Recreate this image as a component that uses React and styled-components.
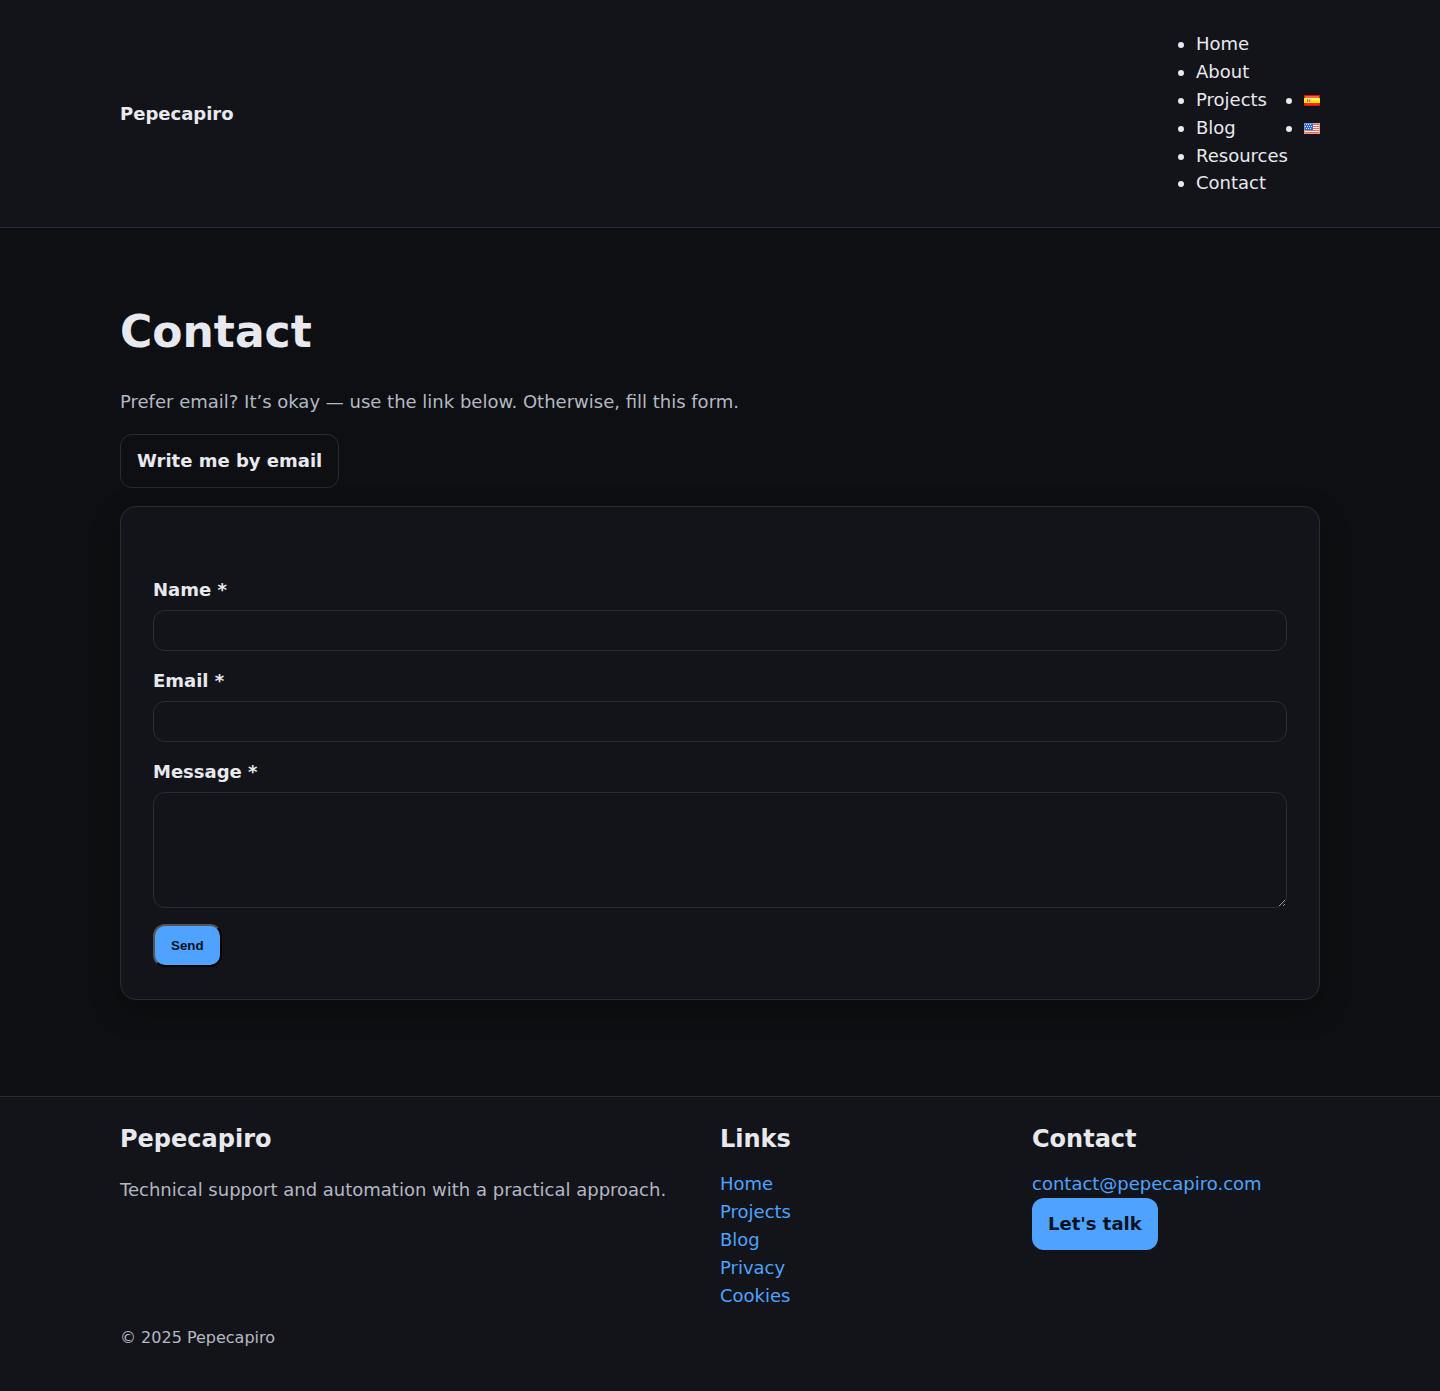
import React from "react";
import styled, { createGlobalStyle } from "styled-components";

const Global = createGlobalStyle`
  *, *::before, *::after { box-sizing: border-box; }
  body {
    margin: 0;
    background: #0e0f12;
    color: #e8e9ee;
    font: 400 18px/1.55 "DejaVu Sans", sans-serif;
  }
`;

const Container = styled.div`
  width: 1200px;
  margin: 0 auto;
`;

const Header = styled.header`
  background: #131419;
  border-bottom: 1px solid #2a2b36;
`;

const Bar = styled(Container)`
  display: flex;
  align-items: center;
  justify-content: space-between;
  height: 227.4px;
`;

const Brand = styled.a`
  font-weight: 700;
`;

const Nav = styled.nav`
  display: flex;
  align-items: center;
  gap: 16px;
`;

const Menu = styled.ul`
  margin: 0;
  padding: 0;
  width: ${(p) => p.$width};
`;

const Main = styled(Container)`
  display: flow-root;
  height: 867.6px;
`;

const Title = styled.h1`
  margin: 75.6px 0 0;
  font-size: 44px;
  line-height: 55px;
`;

const Lead = styled.p`
  margin: 29px 0 18px;
  color: #b3b8c4;
`;

const Button = styled.a`
  display: inline-block;
  padding: 12px 16px;
  border-radius: 12px;
  font-weight: 700;
  border: ${(p) => (p.$ghost ? "1px solid #2a2b36" : "0")};
  background: ${(p) => (p.$ghost ? "transparent" : "#4da3ff")};
  color: ${(p) => (p.$ghost ? "#e8e9ee" : "#0b1220")};
`;

const Card = styled.form`
  display: flex;
  flex-direction: column;
  align-items: flex-start;
  margin-top: 18px;
  padding: 69px 32px 32px;
  height: 494px;
  background: #131419;
  border: 1px solid #2a2b36;
  border-radius: 16px;
  box-shadow: 0 10px 30px rgba(0, 0, 0, 0.25);
`;

const Label = styled.label`
  display: block;
  width: 100%;
  font-weight: 700;
  line-height: 28px;
  margin-bottom: 16px;
`;

const Input = styled.input`
  display: block;
  width: 100%;
  height: 41px;
  margin-top: 6px;
  background: transparent;
  border: 1px solid #2a2b36;
  border-radius: 12px;
`;

const Message = styled.textarea`
  display: block;
  width: 100%;
  height: 116px;
  margin-top: 6px;
  background: transparent;
  border: 1px solid #2a2b36;
  border-radius: 12px;
`;

const Send = styled.button`
  padding: 12px 16px;
  border-radius: 12px;
  border: 2px outset #000;
  background: #4da3ff;
  color: #0b1220;
  font: 700 13.333px "Liberation Sans", Arial, sans-serif;
`;

const Footer = styled.footer`
  background: #131419;
  border-top: 1px solid #2a2b36;
  height: 295px;
`;

const Columns = styled(Container)`
  display: grid;
  grid-template-columns: 576px 288px 288px;
  gap: 24px;
  padding-top: 24px;
`;

const Heading = styled.h3`
  margin: 0 0 13.2px;
  font-size: 24px;
  line-height: 36px;
`;

const Muted = styled.p`
  margin: 19.2px 0 18px;
  color: #b3b8c4;
`;

const FooterLink = styled.a`
  display: block;
  color: #4da3ff;
`;

const Copyright = styled(Container)`
  margin-top: 15.4px;
  font-size: 16px;
  line-height: 25px;
  color: #b3b8c4;
`;

const Flag = styled.svg`
  width: 16px;
  height: 11px;
`;

const Spain = () => (
  <Flag viewBox="0 0 16 11" role="img" aria-label="Español">
    <path fill="#e80f0f" d="M0 0h16v11H0z" />
    <path fill="#f75c55" d="M1 1h14v2H1z" />
    <path fill="#f2281f" d="M1 8h14v2H1z" />
    <path fill="#ffea00" d="M0 3h16v5H0z" />
    <path fill="#fff34d" d="M1 3h14v2H1z" />
    <path fill="#e8b890" d="M3 4h4v3H3z" />
    <path fill="#cf6a50" d="M3 4h1v3H3zM5 5h1v2H5z" />
    <path fill="#f0c9c0" d="M4 4h1v1H4zM6 6h1v1H6z" />
  </Flag>
);

const States = () => (
  <Flag viewBox="0 0 16 11" role="img" aria-label="English">
    <path fill="#fff" d="M0 0h16v11H0z" />
    <path fill="#f2665a" d="M9 1h7v1H9zM9 3h7v1H9zM9 5h7v1H9zM0 7h16v1H0zM0 9h16v1H0z" />
    <path fill="#d9a094" d="M9 0h7v1H9zM0 10h16v1H0zM15 1h1v9h-1zM0 7h1v3H0z" />
    <path fill="#2b68dc" d="M0 0h9v7H0z" />
    <path fill="#7391dd" d="M0 0h9v1H0zM0 1h1v6H0z" />
    <path
      fill="#dbe6fa"
      d="M2 1h1v1H2zM4 1h1v1H4zM6 1h1v1H6zM1 3h1v1H1zM3 3h1v1H3zM5 3h1v1H5zM7 3h1v1H7zM2 5h1v1H2zM4 5h1v1H4zM6 5h1v1H6z"
    />
  </Flag>
);

const pages = ["Home", "About", "Projects", "Blog", "Resources", "Contact"];
const footerPages = ["Home", "Projects", "Blog", "Privacy", "Cookies"];

export default function App() {
  return (
    <>
      <Global />
      <Header>
        <Bar>
          <Brand>Pepecapiro</Brand>
          <Nav>
            <Menu $width="92px">
              {pages.map((t) => (
                <li key={t}>{t}</li>
              ))}
            </Menu>
            <Menu $width="16px">
              <li><Spain /></li>
              <li><States /></li>
            </Menu>
          </Nav>
        </Bar>
      </Header>
      <Main as="main">
        <Title>Contact</Title>
        <Lead>Prefer email? It’s okay — use the link below. Otherwise, fill this form.</Lead>
        <Button $ghost>Write me by email</Button>
        <Card>
          <Label>Name *<Input /></Label>
          <Label>Email *<Input /></Label>
          <Label>Message *<Message /></Label>
          <Send type="button">Send</Send>
        </Card>
      </Main>
      <Footer>
        <Columns>
          <div>
            <Heading>Pepecapiro</Heading>
            <Muted>Technical support and automation with a practical approach.</Muted>
          </div>
          <div>
            <Heading>Links</Heading>
            {footerPages.map((t) => (
              <FooterLink key={t}>{t}</FooterLink>
            ))}
          </div>
          <div>
            <Heading>Contact</Heading>
            <FooterLink>contact@pepecapiro.com</FooterLink>
            <Button>Let's talk</Button>
          </div>
        </Columns>
        <Copyright>© 2025 Pepecapiro</Copyright>
      </Footer>
    </>
  );
}
